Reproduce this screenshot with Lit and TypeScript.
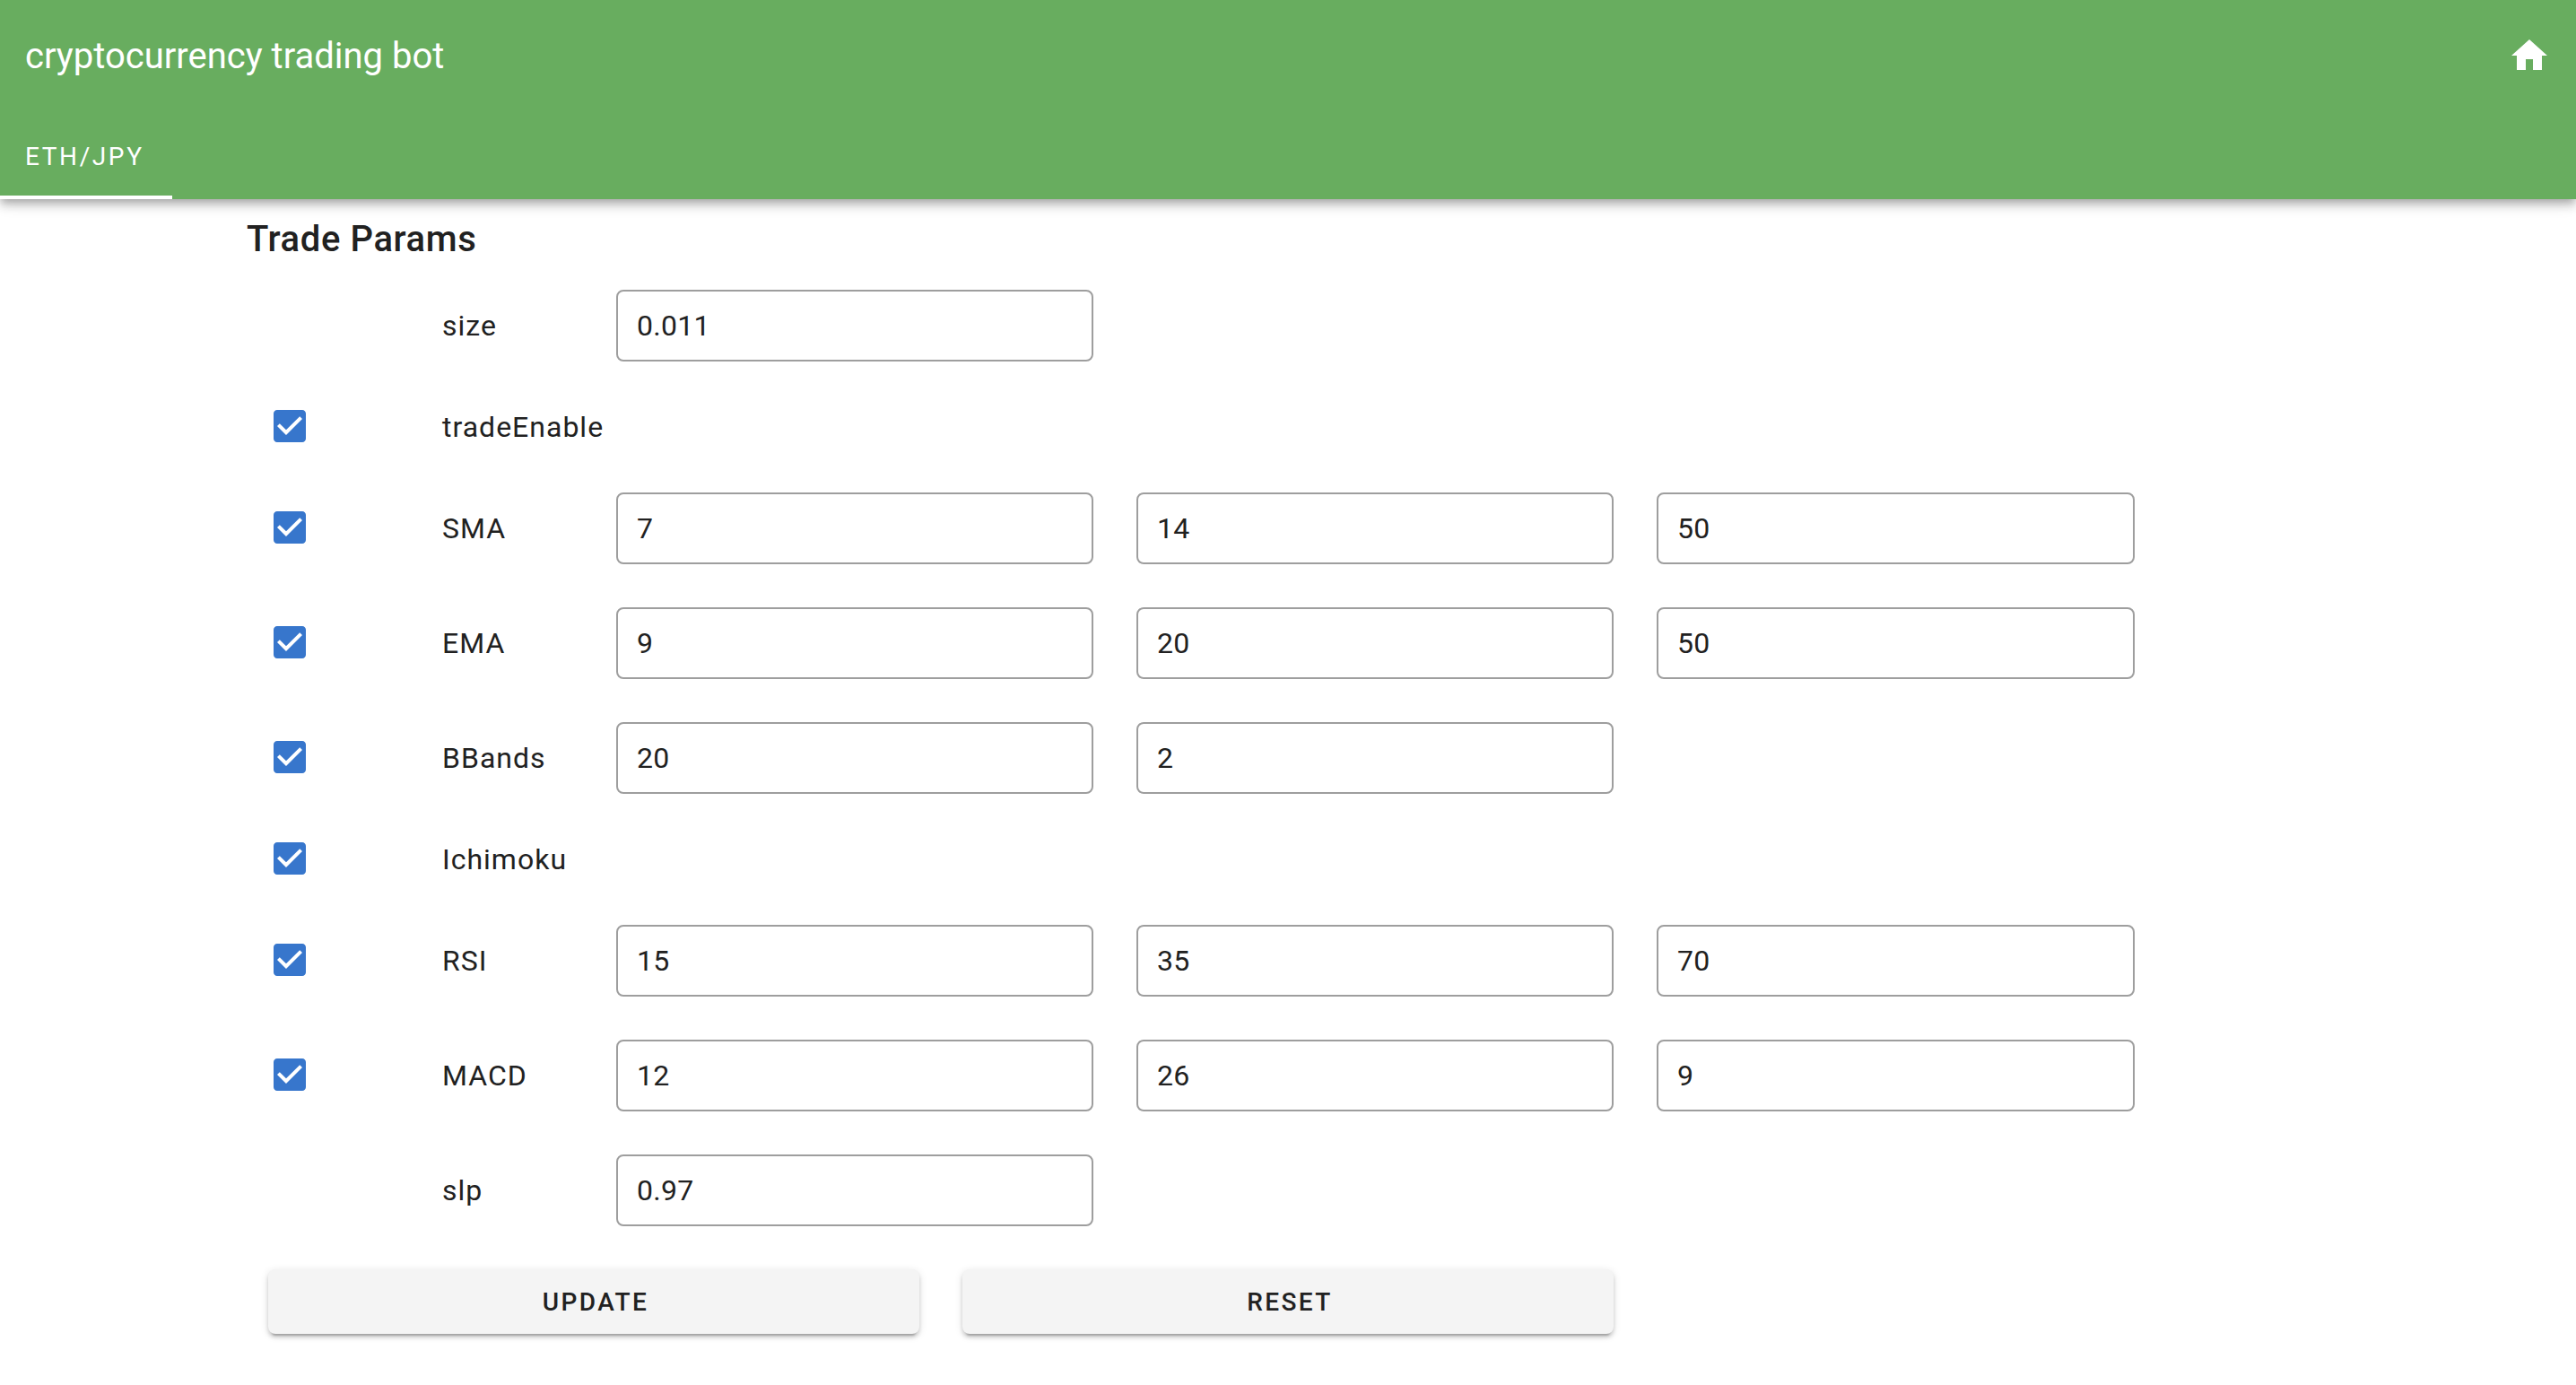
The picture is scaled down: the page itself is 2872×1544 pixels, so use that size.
import {css, html, LitElement} from 'lit';
import {customElement} from 'lit/decorators.js';

const rows = [
    {label: 'size', values: ['0.011']},
    {label: 'tradeEnable', checked: true, values: []},
    {label: 'SMA', checked: true, values: ['7', '14', '50']},
    {label: 'EMA', checked: true, values: ['9', '20', '50']},
    {label: 'BBands', checked: true, values: ['20', '2']},
    {label: 'Ichimoku', checked: true, values: []},
    {label: 'RSI', checked: true, values: ['15', '35', '70']},
    {label: 'MACD', checked: true, values: ['12', '26', '9']},
    {label: 'slp', values: ['0.97']},
];

@customElement('app-root')
export class AppRoot extends LitElement {
    static styles = css`
        :host {
            display: block;
            min-height: 1544px;
            background: #fff;
            color: #212121;
            font-family: Roboto, "Liberation Sans", sans-serif;
        }

        .bar {
            height: 222px;
            background: #68ad5f;
            color: #fff;
            box-shadow: 0 4px 8px -2px rgba(0, 0, 0, 0.2), 0 8px 10px 0 rgba(0, 0, 0, 0.14), 0 2px 20px 0 rgba(0, 0, 0, 0.12);
        }

        .toolbar {
            height: 124px;
            padding: 0 28px;
            display: flex;
            justify-content: space-between;
            align-items: center;
        }

        .title {
            font-size: 40px;
            font-weight: 400;
        }

        .home {
            width: 48px;
            height: 48px;
            fill: #fff;
        }

        .tabs {
            margin-top: 2px;
            display: flex;
        }

        .tab {
            width: 192px;
            height: 96px;
            box-sizing: border-box;
            padding: 4px 0 0 28px;
            display: flex;
            align-items: center;
            font-size: 28px;
            font-weight: 400;
            letter-spacing: 2.6px;
            border-bottom: 4px solid #fff;
        }

        .content {
            padding: 13px 0 0 275px;
        }

        h2 {
            margin: 0;
            font-size: 40px;
            font-weight: 500;
            line-height: 64px;
            letter-spacing: 0.6px;
        }

        .params {
            margin-left: 24px;
        }

        .row {
            display: flex;
            align-items: center;
            height: 128px;
        }

        .row.plain {
            height: 98px;
        }

        .check {
            width: 194px;
            height: 48px;
            margin-bottom: 2px;
            flex: none;
        }

        .check svg {
            display: block;
            width: 48px;
            height: 48px;
            fill: #3776cc;
        }

        .label {
            width: 194px;
            flex: none;
            font-size: 32px;
            letter-spacing: 1px;
        }

        .fields {
            display: flex;
            gap: 48px;
        }

        input {
            width: 532px;
            height: 80px;
            box-sizing: border-box;
            padding: 0 21px;
            border: 2px solid #9e9e9e;
            border-radius: 8px;
            background: #fff;
            color: #212121;
            font: 400 32px Roboto, "Liberation Sans", sans-serif;
            letter-spacing: 0.3px;
            outline: none;
        }

        input:nth-child(3) {
            width: 533px;
        }

        .actions {
            margin-top: 24px;
            display: flex;
            gap: 48px;
        }

        button {
            width: 726px;
            height: 72px;
            padding: 0 0 0 4px;
            border: 0;
            border-radius: 8px;
            background: #f4f4f4;
            color: #212121;
            font: 500 28px Roboto, "Liberation Sans", sans-serif;
            letter-spacing: 2.4px;
            box-shadow: 0 6px 2px -4px rgba(0, 0, 0, 0.2), 0 4px 4px 0 rgba(0, 0, 0, 0.14), 0 2px 10px 0 rgba(0, 0, 0, 0.12);
        }
    `;

    renderRow(row: {label: string; checked?: boolean; values: string[]}) {
        return html`
            <div class="row ${row.values.length ? '' : 'plain'}">
                <div class="check">
                    ${row.checked ? html`
                        <svg viewBox="0 0 24 24"><path d="M19 3H5c-1.11 0-2 .9-2 2v14c0 1.1.89 2 2 2h14c1.11 0 2-.9 2-2V5c0-1.1-.89-2-2-2zm-9 14l-5-5 1.41-1.41L10 14.17l7.59-7.59L19 8l-9 9z"></path></svg>
                    ` : ''}
                </div>
                <div class="label">${row.label}</div>
                <div class="fields">
                    ${row.values.map((value) => html`<input type="text" .value=${value} />`)}
                </div>
            </div>
        `;
    }

    render() {
        return html`
            <header class="bar">
                <div class="toolbar">
                    <div class="title">cryptocurrency trading bot</div>
                    <svg class="home" viewBox="0 0 24 24"><path d="M10 20v-6h4v6h5v-8h3L12 3 2 12h3v8z"></path></svg>
                </div>
                <div class="tabs">
                    <div class="tab">ETH/JPY</div>
                </div>
            </header>
            <main class="content">
                <h2>Trade Params</h2>
                <div class="params">
                    ${rows.map((row) => this.renderRow(row))}
                    <div class="actions">
                        <button>UPDATE</button>
                        <button>RESET</button>
                    </div>
                </div>
            </main>
        `;
    }
}
